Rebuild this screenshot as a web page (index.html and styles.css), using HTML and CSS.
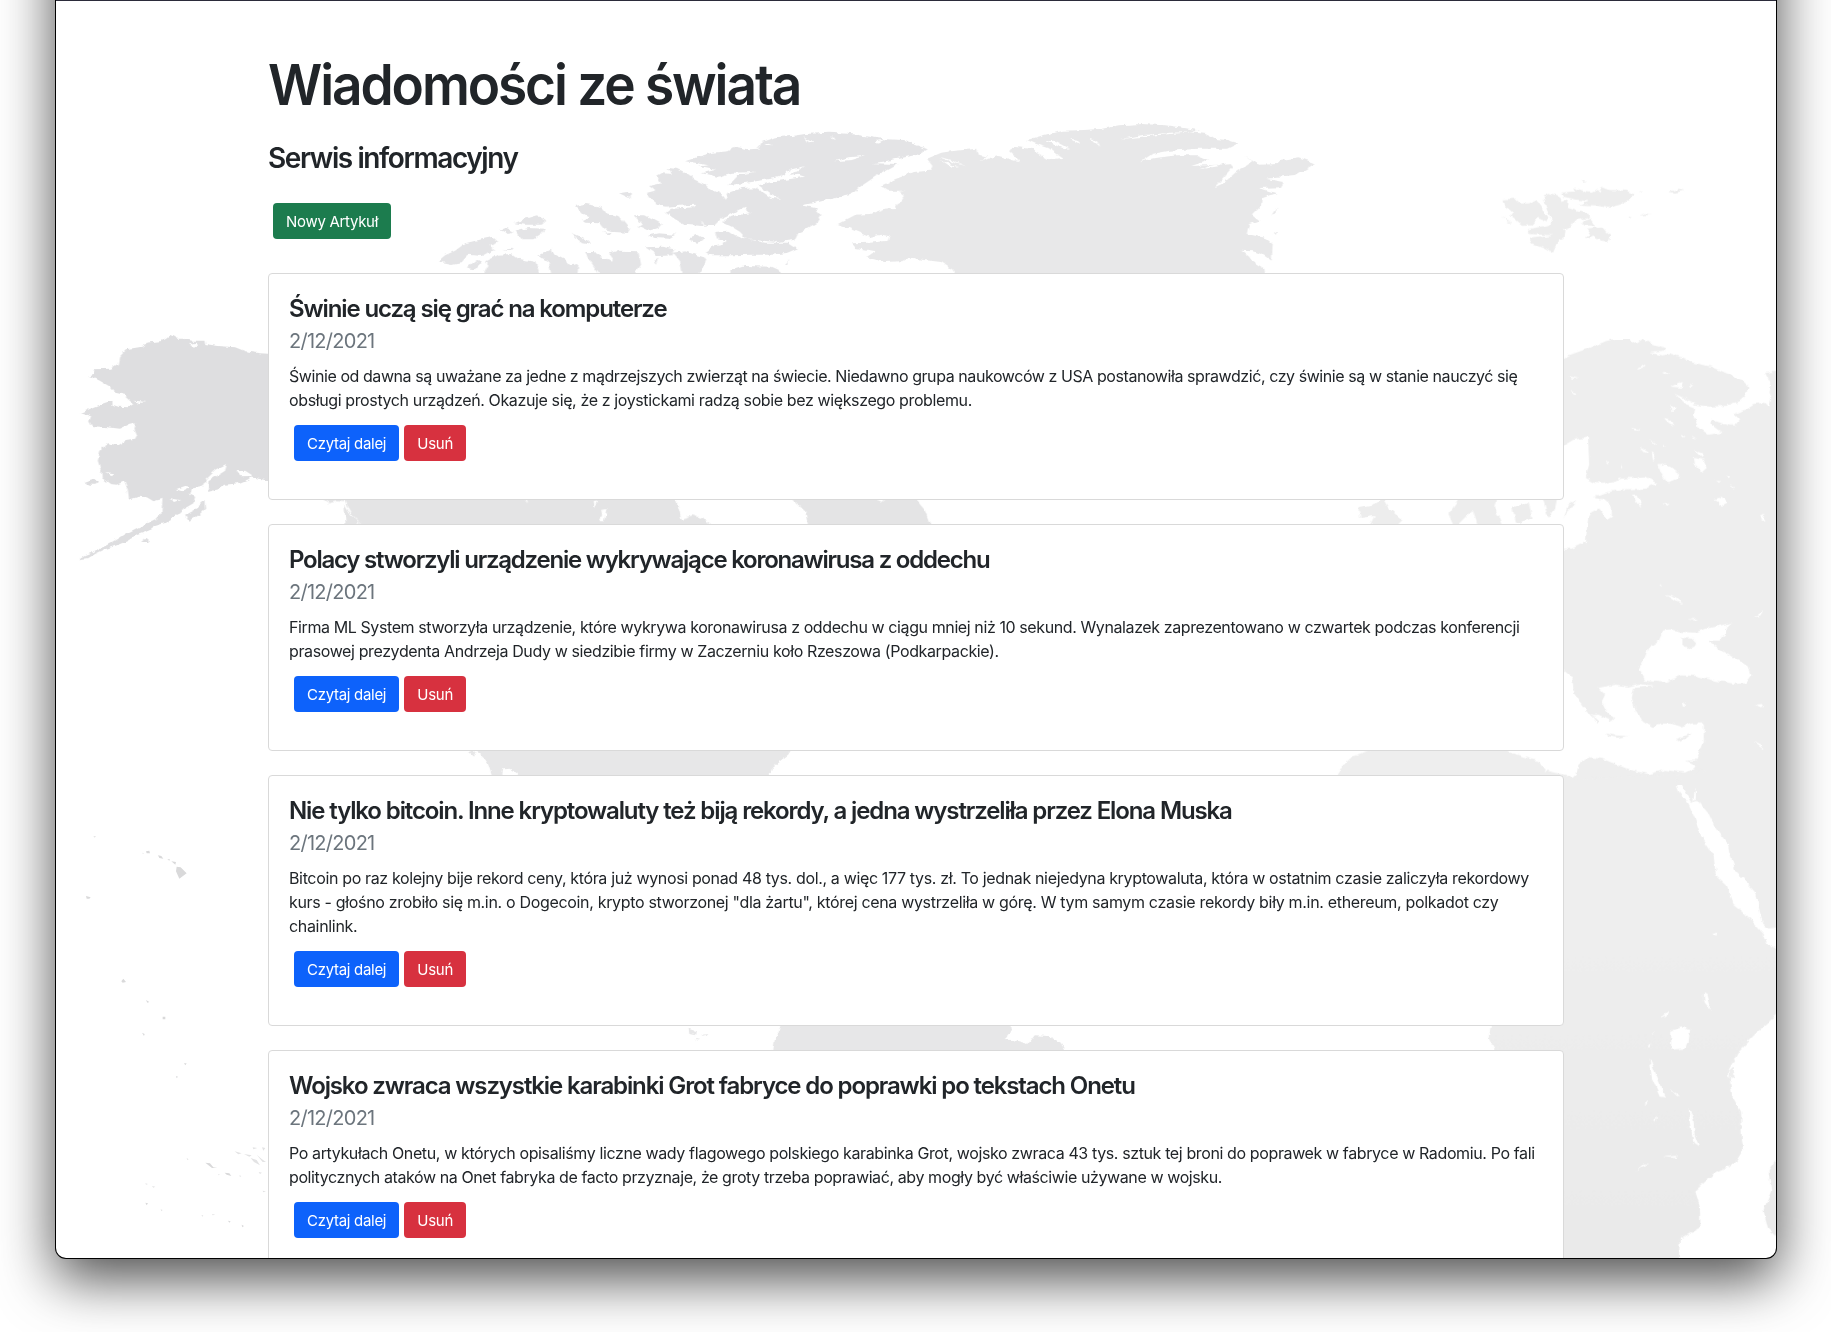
FILE: index.html
```html
<!DOCTYPE html>
<html lang="pl">
<head>
<meta charset="utf-8">
<title>Wiadomości ze świata</title>
<link rel="stylesheet" href="styles.css">
</head>
<body>
<div class="window">
  <svg class="map" viewBox="56 1 1720 1257" aria-hidden="true">
    <defs>
      <filter id="coast" filterUnits="userSpaceOnUse" x="40" y="-10" width="1760" height="1290" color-interpolation-filters="sRGB">
        <feTurbulence type="fractalNoise" baseFrequency="0.16" numOctaves="2" seed="4"/>
        <feDisplacementMap in="SourceGraphic" scale="5" xChannelSelector="R" yChannelSelector="G"/>
      </filter>
      <linearGradient id="africa" x1="0" y1="0" x2="0" y2="1"><stop offset="0.4" stop-color="#eeeeee"/><stop offset="1" stop-color="#eaeaea"/></linearGradient>
    </defs>
    <g filter="url(#coast)" transform="translate(-1.5 -2)">
      <!-- Alaska -->
      <g transform="translate(40 310) scale(.3333)" fill="#dedee0">
        <path d="M700 138L665 136 620 130 590 118 540 114 500 108 498 98 460 98 435 92 415 92 395 80 370 99 325 104 310 116 265 124 242 148 238 168 215 182 168 184 165 198 150 203 180 216 215 236 230 254 265 262 262 268 285 288 270 298 240 296 222 290 222 278 200 284 165 298 126 316 158 325 152 340 160 354 205 358 245 362 270 350 292 346 288 362 296 380 290 392 265 396 240 412 205 406 185 430 178 458 188 490 190 510 215 528 235 530 258 520 268 545 272 575 300 566 325 568 345 580 375 572 372 612 350 634 300 658 265 676 230 698 200 714 165 732 140 742 122 754 150 750 170 738 200 724 235 712 265 700 290 684 325 672 350 654 390 642 430 606 465 586 470 566 455 560 460 542 490 536 505 512 530 488 565 470 560 488 535 504 510 520 508 552 540 544 560 530 600 526 630 514 640 505 660 512 680 516 700 516Z"/>
        <path d="M440 620L470 604 498 578 500 602 480 622 452 642ZM138 522L160 514 178 520 172 530 150 530ZM308 702L320 692 332 702Z"/>
        <g fill="#fff"><path d="M412 544L440 534 455 538 430 550ZM390 570L425 576 410 582ZM455 108L475 104 482 112 465 116ZM200 492L228 496 220 502ZM595 490L620 488 645 504 605 505ZM285 278L322 282 300 286Z"/></g>
      </g>
      <!-- Canadian Arctic -->
      <g transform="translate(420 100) scale(.3333)" fill="#e4e4e6">
        <path d="M800 190L840 176 880 164 930 160 950 146 990 154 1020 152 1030 132 1070 118 1120 114 1160 108 1230 104 1300 108 1360 118 1400 124 1460 126 1490 140 1528 154 1500 170 1460 178 1400 190 1360 196 1440 198 1420 210 1370 236 1320 270 1300 290 1250 300 1200 312 1150 322 1190 330 1210 352 1195 376 1160 396 1140 404 1130 425 1080 432 1030 428 985 424 965 402 940 386 905 370 890 384 850 384 800 380 770 364 742 344 760 330 720 322 690 300 686 284 710 278 692 264 730 256 716 236 735 226 760 228 745 210 775 212 800 225 830 246 865 262 880 276 905 286 920 306 930 284 970 270 1010 268 1060 300 1085 302 1060 290 1020 262 1080 248 1160 236 1140 230 1110 234 1160 205 1120 214 1080 238 1000 252 930 262 960 232 1010 222 940 224 900 236 850 226 890 216 840 206 870 202 830 194Z"/>
        <path d="M890 402L930 398 950 412 990 424 1040 434 1110 434 1138 452 1110 464 1060 470 1000 470 940 472 880 472 862 460 880 446 910 440 925 428 895 420ZM470 324L500 318 545 326 560 344 600 354 632 392 625 404 590 402 560 394 545 376 500 374 490 366 512 356 490 344ZM645 352L680 352 730 378 720 390 690 398 660 384 670 376ZM690 412L720 406 770 410 750 422 705 420ZM815 418L835 410 858 424 840 434 820 432ZM680 448L730 446 770 454 762 472 720 474ZM602 286L625 282 642 290 632 300ZM288 376L320 362 355 352 384 368 370 380 320 380ZM292 400L330 390 380 392 365 410 345 424 310 424 300 412ZM245 396L262 390 286 402 270 408ZM460 404L490 418 520 440 490 436ZM58 490L80 472 110 458 140 436 190 424 225 416 240 430 210 442 232 456 205 466 190 474 150 470 130 492 100 498ZM145 510L175 486 190 490 170 514ZM252 454L285 452 282 458ZM190 540L210 500 200 490 240 470 280 468 300 482 350 492 370 540ZM360 472L400 452 408 470 440 486 450 500 480 495 476 540 400 540 390 490ZM500 462L530 462 545 478 585 488 570 468 600 458 660 460 668 500 640 540 550 540 520 496ZM765 464L800 460 830 470 865 480 855 505 830 540 795 540 785 490ZM935 518L980 504 1060 506 1090 520 1080 540 940 540ZM550 404L580 402 575 410ZM705 490L720 482 712 500Z"/>
        <path d="M1100 498L1112 486 1106 498Z"/>
        <g fill="#fff"><path d="M1250 190L1290 178 1340 174 1300 186ZM880 390L910 360 940 346 980 326 985 340 1000 346 960 350 920 362 895 392ZM1155 114L1190 136 1170 132ZM1240 110L1252 126 1242 122ZM740 326L830 320 828 328 760 332ZM1040 134L1062 142 1040 140ZM870 262L890 260 900 276 880 274ZM1370 130L1400 124 1380 134ZM850 370L866 386 855 380Z"/></g>
      </g>
      <!-- Greenland -->
      <g transform="translate(800 100) scale(.35714 .3333)" fill="#e8e8e9">
        <path d="M360 182L400 164 440 158 500 152 505 170 540 180 560 174 620 190 590 160 600 146 650 152 700 184 740 180 700 150 660 136 640 126 690 110 740 98 800 96 850 92 900 82 960 78 1030 82 1080 90 1128 98 1090 102 1140 108 1160 122 1200 126 1232 136 1200 152 1120 152 1040 158 990 168 960 190 1000 180 1060 172 1120 172 1150 186 1100 204 1170 200 1205 196 1215 208 1165 268 1190 256 1225 222 1270 190 1250 175 1290 200 1345 198 1350 186 1400 178 1448 196 1420 214 1390 234 1310 242 1360 252 1350 268 1290 270 1338 286 1300 300 1298 322 1270 352 1290 368 1262 378 1255 408 1310 420 1328 436 1325 488 1300 470 1275 460 1240 458 1262 476 1270 490 1302 510 1306 540 450 540 430 514 400 492 350 486 310 478 290 490 240 492 190 478 215 460 160 450 150 436 200 434 250 428 255 414 230 410 200 418 160 400 110 378 160 350 200 348 240 332 270 330 295 294 280 282 300 278 250 278 230 264 270 244 300 232 320 222 370 218 375 204Z"/>
        <path d="M1325 350L1340 328 1336 346ZM1328 408L1342 398 1336 410Z"/>
        <g fill="#fff"><path d="M390 176L420 184 470 206 430 192ZM395 186L450 210 420 204ZM900 124L960 112 1040 104 1110 102 1000 112ZM690 130L740 150 760 152 720 128ZM760 122L790 142 782 126ZM815 122L842 146 835 128ZM510 190L530 170 545 172ZM570 176L610 190 595 176ZM1125 214L1180 204 1190 196 1150 204Z"/></g>
      </g>
      <!-- Svalbard -->
      <g transform="translate(1480 160) scale(.3333)" fill="#ededed">
        <path d="M75 124L110 122 125 136 152 136 172 124 190 150 210 178 205 190 180 180 160 202 130 204 110 186 92 172 100 160 80 146ZM195 116L212 108 245 118 250 130 270 128 268 150 300 160 330 168 332 180 290 186 272 210 258 216 255 240 240 244 222 284 195 270 160 256 152 242 200 236 225 232 150 228 148 214 215 200 220 186 205 156ZM248 104L290 100 284 88 320 102 340 104 355 96 372 102 365 86 390 96 440 98 468 106 450 126 425 140 390 150 350 142 300 140 330 130 290 124 255 116ZM310 190L335 182 350 204 320 202ZM325 212L370 206 385 224 400 230 390 250 365 248 345 236 320 244 335 230ZM70 172L105 200 88 192ZM570 102L600 92 620 98 590 104ZM482 172L500 166 522 170ZM450 176L462 178 456 184ZM482 100L494 102 488 106ZM310 68L325 72 314 74Z"/>
      </g>
      <!-- Strip between the first two cards -->
      <g transform="translate(260 480) scale(.4719 .3333)" fill="#e4e4e5">
        <path d="M120 40L175 40 182 72 165 70 150 76 130 59ZM178 40L880 40 892 100 896 122 920 112 945 124 970 150 225 150 200 115 190 90ZM182 80L195 110 222 150 185 150ZM1110 40L1390 40 1400 76 1412 96 1426 150 1166 150 1158 100 1130 60Z"/>
        <path d="M710 70L718 68 712 90ZM726 96L738 92 732 130 722 128 728 112ZM563 60L572 76 568 60ZM1300 59L1320 74 1334 59Z" fill="#fff"/>
      </g>
      <path fill="#ededed" d="M1372 508L1384 500 1390 510 1404 522 1396 530 1370 530 1376 518 1362 520 1360 510ZM1460 502L1480 493 1500 493 1496 508 1504 530 1480 530 1474 512 1456 530 1450 516ZM1514 510L1530 504 1534 520 1518 526ZM1542 493L1560 493 1556 512 1550 520Z"/>
      <!-- Strips around the third card -->
      <g transform="translate(450 740) scale(.4082 .3333)" fill="#e7e7e8">
        <path d="M45 15L850 15 832 50 805 76 792 90 784 120 175 120 168 106 150 92 134 94 130 120 108 120 96 76 82 50 65 33ZM818 840L1360 840 1380 870 1365 905 1385 906 1420 918 1436 892 1470 894 1500 914 1515 950 794 950 796 932 800 902 808 886ZM588 872L606 880 604 892 590 888ZM50 44L66 40 60 56ZM606 900L616 902 610 908ZM622 890L634 888 628 896Z"/>
        <path d="M1362 900L1390 868 1400 868 1385 892 1405 880 1425 876 1410 900 1418 914 1390 904Z" fill="#fff" fill-opacity=".7"/>
      </g>
      <!-- Europe and western Asia -->
      <g transform="translate(1550 320) scale(.3333)">
        <path fill="#eeeeee" d="M30 132L60 112 100 98 140 84 170 70 200 62 240 62 262 76 285 62 310 76 352 90 345 102 300 104 340 112 370 108 400 118 430 134 490 146 530 164 580 186 600 205 592 230 570 250 530 264 480 266 440 260 400 236 380 228 410 256 440 268 436 298 448 326 480 350 520 344 485 318 490 306 540 322 560 322 572 306 556 290 590 274 615 258 650 254 662 266 668 240 660 220 666 196 650 165 684 160 720 160 720 1400 -10 1400 30 1370 70 1376 86 1360 90 1340 120 1318 160 1322 200 1338 245 1356 300 1368 350 1356 410 1364 435 1350 450 1310 466 1270 466 1216 430 1216 400 1228 370 1218 340 1216 315 1230 280 1208 262 1180 250 1140 256 1110 320 1104 270 1098 240 1106 200 1100 150 1110 170 1130 160 1150 175 1180 200 1200 190 1210 150 1190 130 1192 150 1210 148 1218 100 1160 75 1120 72 1080 40 1052 20 1040 20 690 70 692 112 672 110 610 125 585 150 572 175 606 190 596 190 566 165 544 130 540 170 524 220 514 290 512 325 496 290 476 220 482 160 498 100 490 60 500 30 480 30 395 60 370 100 356 120 330 125 300 150 284 200 282 212 300 205 320 175 336 145 370 120 376 122 430 115 470 120 486 150 494 50 500 20 500Z"/>
        <g fill="#fff"><path d="M36 388L75 365 118 358 120 380 122 440 112 480 150 500 130 530 150 560 120 590 112 670 60 692 30 688 30 600 45 570 80 548 36 560ZM330 442L350 436 392 466 388 484 358 496 340 470ZM436 420L465 425 478 450 462 464 440 440ZM498 544L520 536 538 556 524 564ZM254 534L268 532 282 570 266 556ZM344 938L365 934 402 942 440 944 470 932 520 922 552 914 530 934 532 946 510 968 478 968 500 984 560 1020 598 1045 606 1074 590 1096 560 1098 500 1088 440 1074 400 1072 350 1094 290 1088 272 1050 288 1020 300 990 330 970ZM335 796L340 810 334 808ZM350 830L378 838 405 858 380 850ZM416 904L452 902 440 908ZM615 898L645 876 636 892ZM638 590L648 584 644 600 648 612 636 604ZM400 1152L414 1162 404 1168ZM620 1160L648 1158 638 1168ZM264 152L290 138 282 150ZM340 166L366 164 350 172ZM365 206L402 192 405 210ZM365 260L378 270 374 284ZM345 300L372 310 378 326 360 314ZM248 330L275 334 260 338ZM60 174L90 182 70 182ZM65 218L84 226 74 228ZM300 362L326 380 316 378ZM270 384L300 402 290 404ZM310 402L322 412 314 430ZM175 424L180 440 174 436ZM215 430L221 450 216 452ZM345 556L364 554 354 562ZM500 488L516 490 508 494ZM536 470L548 478 540 480ZM545 500L558 514 550 512ZM400 350L412 356 404 358ZM430 352L446 364 436 362ZM436 396L464 406 460 420 444 404ZM424 196L436 206 428 206ZM615 1270L640 1284 646 1294 626 1280ZM345 380L352 386 344 386Z"/></g>
        <path fill="#eeeeee" d="M402 960L430 962 446 980 420 996 402 976ZM170 1246L200 1252 240 1254 210 1260 176 1254ZM380 1264L430 1246 412 1262 392 1270ZM60 560L80 548 66 572 46 596ZM140 530L165 536 150 544Z"/>
      </g>
      <!-- Africa and Arabia -->
      <g transform="translate(1480 740) scale(.3333 .37756)">
        <path fill="url(#africa)" d="M70 28L100 44 180 62 200 86 250 96 262 110 285 110 684 90 620 60 930 60 930 500 870 505 852 490 836 430 826 402 770 350 752 300 748 280 712 240 690 200 655 164 640 172 598 104 592 110 600 140 630 176 650 215 668 260 705 310 712 362 745 390 765 440 800 465 836 500 856 520 866 545 889 556 930 570 930 710 889 738 835 780 782 828 750 880 762 950 788 990 790 1060 794 1090 770 1126 710 1150 650 1200 664 1240 666 1296 604 1326 600 1400 240 1400 240 840 55 840 30 795 42 740 240 740ZM930 1100L889 1120 870 1145 878 1200 855 1250 868 1300 889 1318 930 1330Z"/>
        <path fill="#eeeeee" d="M-440 130L-415 80 -380 50 -340 36 -290 20 70 20 100 40 180 62 200 94 180 130Z"/>
        <g fill="#fff"><path d="M578 775L610 766 635 770 630 805 625 822 578 826ZM513 845L528 880 545 920 562 952 545 950 520 900ZM630 976L645 1010 648 1050 662 1082 645 1072 634 1020ZM676 676L684 680 696 720 678 700ZM546 744L570 724 564 738ZM572 930L602 948 592 948ZM494 970L512 956 504 970ZM524 1012L536 1004 530 1016ZM470 1148L495 1128 512 1128 490 1136ZM552 1108L594 1104 592 1110ZM700 518L716 512 714 524ZM644 164L652 130 652 162ZM518 786L530 776 524 784ZM510 818L518 808 516 820Z"/></g>
        <path fill="#eeeeee" d="M752 880L765 870 768 900 756 904Z"/>
      </g>
    </g>
    <!-- Pacific islands -->
    <g transform="translate(60 830) scale(.3333)" fill="#d9d9da">
      <path d="M350 110L362 112 380 130 358 146 348 124ZM294 76L304 78 310 86 298 84ZM258 64L268 62 270 70 260 70ZM334 94L348 96 346 104ZM322 88L330 88 328 92ZM78 198L92 202 88 206 80 206ZM184 454L190 446 198 456 188 458ZM308 560L316 560 316 568 308 568ZM246 608L254 612 252 618ZM258 510L268 516 262 518ZM372 700L380 700 376 706ZM348 738L354 740 350 745ZM256 1118L264 1120 260 1126ZM504 1172L512 1174 508 1178ZM545 1184L552 1188 547 1192ZM436 998L450 1000 460 1012 472 1014 456 1014ZM494 1028L508 1030 514 1038 500 1034Z"/>
      <path fill="#e3e3e4" d="M524 964L545 970 535 973ZM552 972L575 976 568 980ZM572 984L590 990 600 1006 582 996ZM590 974L606 988 618 996 608 996ZM578 952L592 954 580 958ZM606 952L616 954 610 962ZM596 1026L606 1028 600 1032ZM608 1082L618 1084 610 1087ZM424 1156L430 1156 428 1160ZM456 1152L466 1154 458 1156ZM538 1036L544 1038 540 1041ZM380 984L386 988 382 990ZM256 1060L264 1062 258 1064ZM276 1068L286 1070 280 1073ZM302 1138L308 1140 304 1144ZM100 18L108 19 104 23ZM248 68L252 70 248 72ZM474 1032L480 1034 476 1036Z"/>
    </g>
  </svg>

  <main class="container">
    <h1 class="title"><span>Wiadomości ze świata</span></h1>
    <h3 class="subtitle">Serwis informacyjny</h3>
    <a class="btn btn-success">Nowy Artykuł</a>

    <article class="card">
      <h4 class="card-title">Świnie uczą się grać na komputerze</h4>
      <div class="card-date">2/12/2021</div>
      <p class="card-text"><span class="tight-4">Świnie od dawna są uważane za jedne z mądrzejszych zwierząt na świecie. Niedawno grupa naukowców z USA postanowiła sprawdzić, czy świnie są w stanie nauczyć się</span><br><span class="tight-2">obsługi prostych urządzeń. Okazuje się, że z joystickami radzą sobie bez większego problemu.</span></p>
      <div class="actions"><a class="btn btn-primary">Czytaj dalej</a><a class="btn btn-danger">Usuń</a></div>
    </article>

    <article class="card">
      <h4 class="card-title title-tight">Polacy stworzyli urządzenie wykrywające koronawirusa z oddechu</h4>
      <div class="card-date">2/12/2021</div>
      <p class="card-text"><span class="tight-3">Firma ML System stworzyła urządzenie, które wykrywa koronawirusa z oddechu w ciągu mniej niż 10 sekund. Wynalazek zaprezentowano w czwartek podczas konferencji</span><br><span class="tight-2">prasowej prezydenta Andrzeja Dudy w siedzibie firmy w Zaczerniu koło Rzeszowa (Podkarpackie).</span></p>
      <div class="actions"><a class="btn btn-primary">Czytaj dalej</a><a class="btn btn-danger">Usuń</a></div>
    </article>

    <article class="card">
      <h4 class="card-title">Nie tylko bitcoin. Inne kryptowaluty też biją rekordy, a jedna wystrzeliła przez Elona Muska</h4>
      <div class="card-date">2/12/2021</div>
      <p class="card-text"><span class="tight-1">Bitcoin po raz kolejny bije rekord ceny, która już wynosi ponad 48 tys. dol., a więc 177 tys. zł. To jednak niejedyna kryptowaluta, która w ostatnim czasie zaliczyła rekordowy</span><br><span class="tight-0">kurs - głośno zrobiło się m.in. o Dogecoin, krypto stworzonej "dla żartu", której cena wystrzeliła w górę. W tym samym czasie rekordy biły m.in. ethereum, polkadot czy</span><br><span class="tight-0">chainlink.</span></p>
      <div class="actions"><a class="btn btn-primary">Czytaj dalej</a><a class="btn btn-danger">Usuń</a></div>
    </article>

    <article class="card">
      <h4 class="card-title">Wojsko zwraca wszystkie karabinki Grot fabryce do poprawki po tekstach Onetu</h4>
      <div class="card-date">2/12/2021</div>
      <p class="card-text"><span class="tight-2">Po artykułach Onetu, w których opisaliśmy liczne wady flagowego polskiego karabinka Grot, wojsko zwraca 43 tys. sztuk tej broni do poprawek w fabryce w Radomiu. Po fali</span><br><span class="tight-3">politycznych ataków na Onet fabryka de facto przyznaje, że groty trzeba poprawiać, aby mogły być właściwie używane w wojsku.</span></p>
      <div class="actions"><a class="btn btn-primary">Czytaj dalej</a><a class="btn btn-danger">Usuń</a></div>
    </article>
  </main>
</div>
</body>
</html>
```

FILE: styles.css
```css
* { box-sizing: border-box; }

html { height: 100%; overflow: hidden; background: #fff; }

body {
  height: 1332px;
  margin: 0;
  overflow: hidden;
  background: #fff;
  color: #212529;
  font-family: Inter, "Liberation Sans", sans-serif;
  font-size: 16px;
  line-height: 24px;
}

/* The window continues above the viewport, so its side shadows do too */
.window {
  position: relative;
  width: 1722px;
  height: 1359px;
  margin: -100px 0 0 55px;
  padding-top: 100px;
  border: 1px solid #000;
  border-top: 0;
  border-radius: 0 0 11px 11px;
  background: #fff linear-gradient(#2b2b3a, #2b2b3a) 0 100px / 100% 1px no-repeat;
  box-shadow: 0 20px 55px rgba(0, 0, 0, .7);
  overflow: hidden;
}

.map {
  position: absolute;
  left: 0;
  top: 101px;
  width: 1720px;
  height: 1257px;
}

.container {
  position: relative;
  width: 1320px;
  margin: 0 auto;
  padding: 52px 12px 0;
}

h1, h3, h4, p { margin: 0; font-weight: 600; white-space: nowrap; }
p { font-weight: 400; }

.title { font-size: 56px; line-height: 67px; letter-spacing: -2.2px; }
.title span { display: inline-block; transform: scaleX(.95); transform-origin: 0 0; }
.subtitle { margin-top: 22px; font-size: 28px; line-height: 34px; letter-spacing: -1.42px; }

.btn {
  display: inline-block;
  height: 36px;
  padding: 0 13px;
  border-radius: 4px;
  color: #fff;
  font-size: 15px;
  line-height: 37px;
  letter-spacing: -.3px;
}
.btn-success { margin: 28px 0 0 5px; background: #1c7c4e; }
.btn-primary { background: #0d62fb; }
.btn-danger { background: #d7313f; letter-spacing: -.2px; }

.card {
  margin-bottom: 24px;
  padding: 20px 20px 38px;
  border: 1px solid #d9d9d9;
  border-radius: 4px;
  background: #fff;
}
.btn-success + .card { margin-top: 34px; }
.card-title { font-size: 24px; line-height: 29px; letter-spacing: -1.12px; }
.title-tight { letter-spacing: -1.23px; }
.card-date { margin: 3px 0 8px; color: #6c757d; font-size: 20px; line-height: 30px; letter-spacing: -.73px; }
.actions { display: flex; gap: 5px; margin: 13px 0 0 5px; }

.tight-0 { letter-spacing: -.324px; }
.tight-1 { letter-spacing: -.35px; }
.tight-2 { letter-spacing: -.38px; }
.tight-3 { letter-spacing: -.4px; }
.tight-4 { letter-spacing: -.428px; }
```
